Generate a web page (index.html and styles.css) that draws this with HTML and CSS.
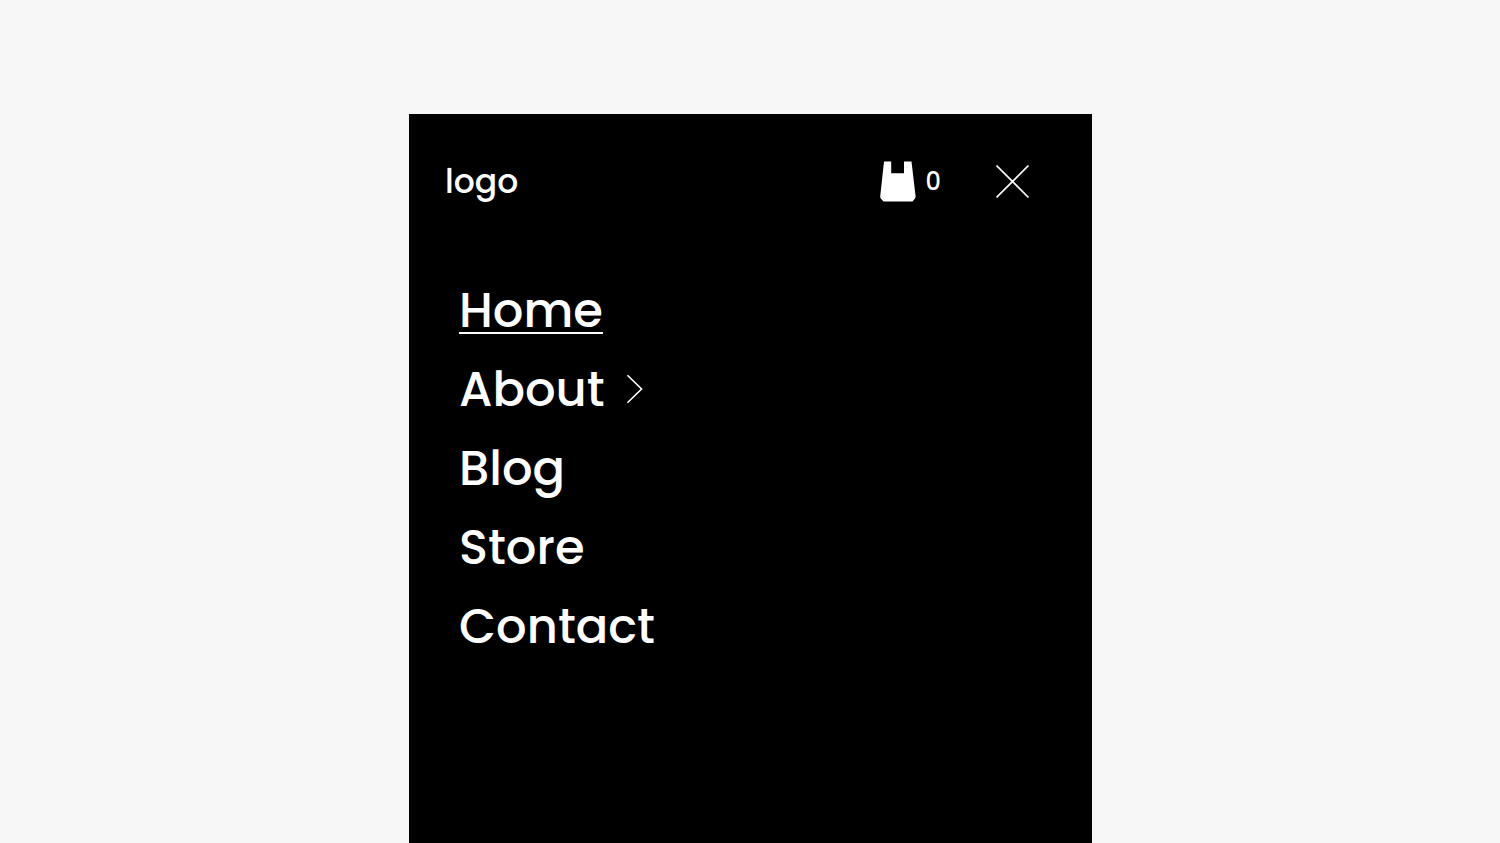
FILE: index.html
```html
<!DOCTYPE html>
<html lang="en">
<head>
<meta charset="utf-8">
<meta name="viewport" content="width=device-width, initial-scale=1">
<title>Menu</title>
<link rel="stylesheet" href="styles.css">
</head>
<body>
<div class="panel">
  <header class="bar">
    <a class="logo" href="#">logo</a>
    <div class="actions">
      <a class="cart" href="#" aria-label="Cart, 0 items">
        <svg class="bag" viewBox="0 0 36 42" aria-hidden="true"><path d="M4 .4H11.2V12.2H24V.4H31.5L35.6 35.5Q35.7 36.6 35 37.5L32.5 40.6H3.5L.8 37.5Q0 36.6 .2 35.5Z"/></svg>
        <span class="count">0</span>
      </a>
      <button class="close" type="button" aria-label="Close menu">
        <svg viewBox="0 0 34 34" aria-hidden="true"><path d="M.5 .5L32.5 32.5M32.5 .5L.5 32.5"/></svg>
      </button>
    </div>
  </header>
  <nav class="menu">
    <a class="item current" href="#" aria-current="page">Home</a>
    <a class="item" href="#">About
      <svg class="chevron" viewBox="0 0 18 30" aria-hidden="true"><path d="M.4 .2L14.6 14L.4 27.8"/></svg>
    </a>
    <a class="item" href="#">Blog</a>
    <a class="item" href="#">Store</a>
    <a class="item" href="#">Contact</a>
  </nav>
</div>
</body>
</html>
```
FILE: styles.css
```css
* { box-sizing: border-box; }

body {
  display: flex;
  justify-content: center;
  min-height: 100vh;
  margin: 0;
  padding-top: 114px;
  background: #f7f7f7;
  color: #fff;
  font-family: Poppins, Inter, sans-serif;
  font-weight: 500;
}

.panel {
  width: 100%;
  max-width: 683px;
  margin-left: 1px;
  background: #000;
}

.bar {
  display: flex;
  align-items: center;
  justify-content: space-between;
  padding: 44px 62px 0 36px;
}

a { color: inherit; text-decoration: none; }

.logo { font-size: 33px; line-height: 48px; }

.actions, .cart { display: flex; align-items: center; }
.actions { gap: 55px; }
.cart { gap: 10px; }

.bag { width: 36px; height: 42px; fill: #fff; }
.count { font-size: 24px; line-height: 32px; }

.close {
  display: flex;
  padding: 0;
  border: 0;
  background: none;
  cursor: pointer;
}

.close svg { width: 34px; height: 34px; }
.close path, .chevron path { fill: none; stroke: #fff; stroke-width: 1.6; }
.chevron { overflow: visible; }

.menu {
  display: flex;
  flex-direction: column;
  align-items: flex-start;
  gap: 35px;
  padding: 84px 50px;
}

.item {
  display: flex;
  align-items: center;
  gap: 22px;
  border-bottom: 2px solid transparent;
  font-size: 48px;
  line-height: 42px;
}

.current { border-color: #fff; }
.chevron { width: 18px; height: 30px; }
```
